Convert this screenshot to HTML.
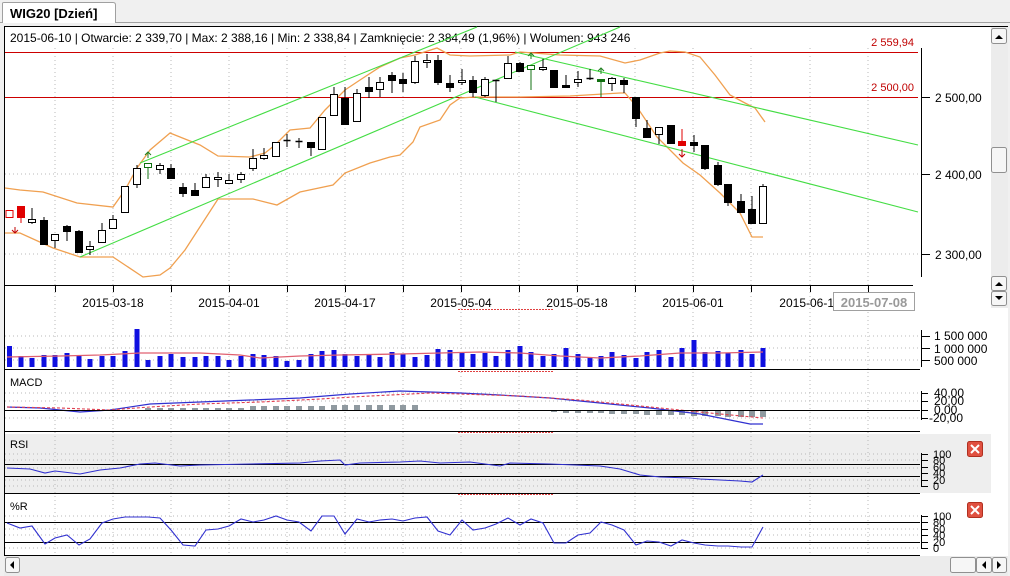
<!DOCTYPE html>
<html><head><meta charset="utf-8">
<style>
*{margin:0;padding:0;box-sizing:border-box}
body{width:1010px;height:576px;overflow:hidden;background:#f0f0f0;font-family:"Liberation Sans",sans-serif;position:relative}
svg{position:absolute;left:0;top:0}
</style></head><body>
<svg width="1010" height="576" viewBox="0 0 1010 576" font-family="Liberation Sans, sans-serif">
<rect x="0" y="22" width="1010" height="554" fill="#f0f0f0"/>
<line x1="0" y1="22.5" x2="1010" y2="22.5" stroke="#a0a0a0"/>
<path d="M2.5 23 V3.5 Q2.5 2.5 4 2.5 H113 Q115.5 2.5 115.5 5 V23" fill="#fff" stroke="#a0a0a0"/>
<text x="10" y="18" font-size="13" font-weight="bold" fill="#000">WIG20 [Dzień]</text>
<rect x="4" y="26" width="1004" height="530" fill="#fff"/>
<line x1="4.5" y1="26" x2="4.5" y2="556" stroke="#000"/>
<line x1="4" y1="26.5" x2="1008" y2="26.5" stroke="#000"/>
<rect x="5" y="434" width="986" height="59" fill="#eeeeee"/>
<g stroke="#b8b8b8" stroke-dasharray="1,3">
<line x1="55" y1="48" x2="55" y2="556"/><line x1="113" y1="48" x2="113" y2="556"/><line x1="171" y1="48" x2="171" y2="556"/><line x1="229" y1="48" x2="229" y2="556"/><line x1="287" y1="48" x2="287" y2="556"/><line x1="345" y1="48" x2="345" y2="556"/><line x1="403" y1="48" x2="403" y2="556"/><line x1="461" y1="48" x2="461" y2="556"/><line x1="519" y1="48" x2="519" y2="556"/><line x1="577" y1="48" x2="577" y2="556"/><line x1="635" y1="48" x2="635" y2="556"/><line x1="693" y1="48" x2="693" y2="556"/><line x1="751" y1="48" x2="751" y2="556"/><line x1="810" y1="48" x2="810" y2="556"/><line x1="868" y1="48" x2="868" y2="556"/>
<line x1="5" y1="174" x2="920" y2="174"/><line x1="5" y1="254" x2="920" y2="254"/>
<line x1="5" y1="336" x2="920" y2="336"/><line x1="5" y1="348" x2="920" y2="348"/><line x1="5" y1="360" x2="920" y2="360"/>
<line x1="5" y1="393" x2="920" y2="393"/><line x1="5" y1="401" x2="920" y2="401"/><line x1="5" y1="418" x2="920" y2="418"/>
<line x1="5" y1="454" x2="920" y2="454"/><line x1="5" y1="460" x2="920" y2="460"/><line x1="5" y1="468" x2="920" y2="468"/><line x1="5" y1="480" x2="920" y2="480"/><line x1="5" y1="486" x2="920" y2="486"/>
<line x1="5" y1="516" x2="920" y2="516"/><line x1="5" y1="529" x2="920" y2="529"/><line x1="5" y1="535" x2="920" y2="535"/><line x1="5" y1="548" x2="920" y2="548"/>
</g>
<text x="10" y="42" font-size="12" fill="#000">2015-06-10 | Otwarcie: 2 339,70 | Max: 2 388,16 | Min: 2 338,84 | Zamknięcie: 2 384,49 (1,96%)  | Wolumen: 943 246</text>
<line x1="5" y1="52.5" x2="918" y2="52.5" stroke="#cc0000"/>
<line x1="5" y1="97.5" x2="918" y2="97.5" stroke="#cc0000"/>
<text x="914" y="46" font-size="11" fill="#c00000" text-anchor="end">2 559,94</text>
<text x="914" y="91" font-size="11" fill="#c00000" text-anchor="end">2 500,00</text>
<line x1="921.5" y1="48" x2="921.5" y2="277" stroke="#000"/>
<g stroke="#000"><line x1="921" y1="97.5" x2="930" y2="97.5"/><line x1="921" y1="174.5" x2="930" y2="174.5"/><line x1="921" y1="254.5" x2="930" y2="254.5"/></g>
<g font-size="12" fill="#000"><text x="935" y="102">2 500,00</text><text x="935" y="179">2 400,00</text><text x="935" y="259">2 300,00</text></g>
<g fill="none" stroke="#f0a050" stroke-width="1.3">
<polyline points="5,188 20,190 43,192 77,203 113,207 125,190 137,168 150,150 170,133 200,145 218,156 250,157 265,153 275,145 290,130 310,128 325,110 345,90 360,80 380,67 400,58 415,55 437,48 450,55 470,56 510,55 520,52 560,55 600,56 625,63 640,60 660,53 670,51 685,52 700,57 715,75 730,95 745,103 755,108 765,122"/>
<polyline points="5,233 20,233 53,248 80,257 113,257 125,265 143,277 160,275 170,268 185,250 218,199 253,199 277,205 300,192 333,185 345,173 370,163 390,157 400,155 413,142 420,127 440,120 450,105 460,98 475,97 520,97 570,96 620,93 625,93 637,107 657,137 683,163 700,175 720,193 740,213 752,237 763,237"/>
</g>
<g stroke="#44dd44" stroke-width="1.1">
<line x1="140" y1="163" x2="477" y2="27"/>
<line x1="80" y1="257" x2="620" y2="27"/>
<line x1="515" y1="52" x2="918" y2="145"/>
<line x1="475" y1="97" x2="918" y2="212"/>
</g>
<g id="candles"></g>
<g fill="none" stroke-width="1">
<path d="M15 227 v6 M12 230 l3 3 3 -3" stroke="#c00000"/>
<path d="M148 158 v-6 M145 155 l3 -3 3 3" stroke="#208020"/>
<path d="M531 59 v-6 M528 56 l3 -3 3 3" stroke="#208020"/>
<path d="M601 74 v-6 M598 71 l3 -3 3 3" stroke="#208020"/>
<path d="M682 149 v8 M679 154 l3 3 3 -3" stroke="#c00000"/>
</g>
<line x1="5" y1="285.5" x2="913" y2="285.5" stroke="#000"/>
<g stroke="#000"><line x1="55.5" y1="285" x2="55.5" y2="292"/><line x1="113.5" y1="285" x2="113.5" y2="292"/><line x1="171.5" y1="285" x2="171.5" y2="292"/><line x1="229.5" y1="285" x2="229.5" y2="292"/><line x1="287.5" y1="285" x2="287.5" y2="292"/><line x1="345.5" y1="285" x2="345.5" y2="292"/><line x1="403.5" y1="285" x2="403.5" y2="292"/><line x1="461.5" y1="285" x2="461.5" y2="292"/><line x1="519.5" y1="285" x2="519.5" y2="292"/><line x1="577.5" y1="285" x2="577.5" y2="292"/><line x1="635.5" y1="285" x2="635.5" y2="292"/><line x1="693.5" y1="285" x2="693.5" y2="292"/><line x1="751.5" y1="285" x2="751.5" y2="292"/><line x1="810.5" y1="285" x2="810.5" y2="292"/><line x1="868.5" y1="285" x2="868.5" y2="292"/></g>
<g font-size="12" fill="#000" text-anchor="middle"><text x="113" y="307">2015-03-18</text><text x="229" y="307">2015-04-01</text><text x="345" y="307">2015-04-17</text><text x="461" y="307">2015-05-04</text><text x="577" y="307">2015-05-18</text><text x="693" y="307">2015-06-01</text><text x="810" y="307">2015-06-15</text></g>
<rect x="833.5" y="292.5" width="81" height="18" fill="#fff" stroke="#a0a0a0"/>
<text x="874" y="307" font-size="13" font-weight="bold" fill="#999" text-anchor="middle">2015-07-08</text>
<g stroke="#e04040" stroke-dasharray="2,1"><line x1="458" y1="309.5" x2="553" y2="309.5"/><line x1="458" y1="371.5" x2="553" y2="371.5"/><line x1="458" y1="432.5" x2="553" y2="432.5"/><line x1="458" y1="494.5" x2="553" y2="494.5"/></g>
<g id="vol"></g>
<polyline fill="none" stroke="#e06070" stroke-width="1.3" points="7,357 60,356 100,355 140,353 200,353 240,355 260,358 300,356 340,355 400,354 440,353 480,352 520,353 560,356 600,358 640,356 680,353 720,353 763,352"/>
<line x1="5" y1="369.5" x2="920" y2="369.5" stroke="#000"/>
<line x1="921.5" y1="330" x2="921.5" y2="367" stroke="#000"/>
<g stroke="#000"><line x1="921" y1="336.5" x2="930" y2="336.5"/><line x1="921" y1="348.5" x2="930" y2="348.5"/><line x1="921" y1="360.5" x2="930" y2="360.5"/></g>
<g font-size="12" fill="#000"><text x="934" y="340">1 500 000</text><text x="934" y="353">1 000 000</text><text x="934" y="365">500 000</text></g>
<text x="10" y="386" font-size="11" fill="#000">MACD</text>
<g id="hist" fill="#909aa0"></g>
<polyline fill="none" stroke="#3030d0" stroke-width="1.2" points="7,407 40,408 80,412 110,410 150,404 200,402 250,400 300,398 350,394 400,391 430,392 460,393 500,395 550,398 600,403 650,408 700,414 730,420 750,424 763,424"/>
<polyline fill="none" stroke="#e04050" stroke-width="1.1" stroke-dasharray="3,2" points="7,407 60,408 110,410 150,407 200,404 260,402 320,399 370,396 430,393 460,394 520,396 580,400 630,405 680,410 720,414 763,418"/>
<line x1="5" y1="410.5" x2="920" y2="410.5" stroke="#000"/>
<line x1="5" y1="431.5" x2="920" y2="431.5" stroke="#000"/>
<line x1="921.5" y1="391" x2="921.5" y2="420" stroke="#000"/>
<g stroke="#000"><line x1="921" y1="393.5" x2="928" y2="393.5"/><line x1="921" y1="401.5" x2="928" y2="401.5"/><line x1="921" y1="410.5" x2="928" y2="410.5"/><line x1="921" y1="418.5" x2="928" y2="418.5"/></g>
<g font-size="12" fill="#000"><text x="934" y="397">40,00</text><text x="934" y="405">20,00</text><text x="934" y="414">0,00</text><text x="929" y="422">-20,00</text></g>
<text x="10" y="448" font-size="11" fill="#000">RSI</text>
<line x1="5" y1="464.5" x2="920" y2="464.5" stroke="#000"/>
<line x1="5" y1="476.5" x2="920" y2="476.5" stroke="#000"/>
<polyline fill="none" stroke="#3030d0" stroke-width="1.1" points="7,468 30,469 45,473 55,471 80,474 100,470 120,468 140,464 155,463 180,466 200,465 250,464 300,463 320,461 340,460 345,465 360,463 400,462 420,461 440,463 470,462 500,466 510,463 550,464 600,466 620,469 640,475 660,477 690,478 700,479 720,480 740,481 752,482 763,475"/>
<line x1="5" y1="493.5" x2="920" y2="493.5" stroke="#000"/>
<line x1="921.5" y1="453" x2="921.5" y2="487" stroke="#000"/>
<g stroke="#000"><line x1="921" y1="454.5" x2="928" y2="454.5"/><line x1="921" y1="460.5" x2="928" y2="460.5"/><line x1="921" y1="467.5" x2="928" y2="467.5"/><line x1="921" y1="473.5" x2="928" y2="473.5"/><line x1="921" y1="480.5" x2="928" y2="480.5"/><line x1="921" y1="486.5" x2="928" y2="486.5"/></g>
<g font-size="11" fill="#000"><text x="933" y="458">100</text><text x="933" y="464">80</text><text x="933" y="471">60</text><text x="933" y="477">40</text><text x="933" y="484">20</text><text x="933" y="490">0</text></g>
<text x="10" y="510" font-size="11" fill="#000">%R</text>
<line x1="5" y1="522.5" x2="920" y2="522.5" stroke="#000"/>
<line x1="5" y1="542.5" x2="920" y2="542.5" stroke="#000"/>
<polyline fill="none" stroke="#3030d0" stroke-width="1.1" points="7,523 20,528 32,526 45,544 55,538 67,535 79,545 90,539 102,523 113,519 125,517 137,517 148,517 160,518 171,530 183,545 195,546 206,530 218,529 229,526 241,519 253,522 264,520 276,516 287,520 299,522 311,531 322,516 334,516 345,534 357,519 369,522 380,520 392,519 403,521 415,518 427,517 438,531 450,535 462,520 473,530 485,528 496,524 508,518 520,525 531,519 543,523 554,543 566,543 578,535 590,533 601,522 612,525 624,530 636,545 647,541 659,542 671,546 682,540 694,543 705,545 718,546 728,546 741,547 752,547 763,527"/>
<line x1="5" y1="555.5" x2="920" y2="555.5" stroke="#000"/>
<line x1="921.5" y1="515" x2="921.5" y2="549" stroke="#000"/>
<g stroke="#000"><line x1="921" y1="516.5" x2="928" y2="516.5"/><line x1="921" y1="522.5" x2="928" y2="522.5"/><line x1="921" y1="529.5" x2="928" y2="529.5"/><line x1="921" y1="535.5" x2="928" y2="535.5"/><line x1="921" y1="542.5" x2="928" y2="542.5"/><line x1="921" y1="548.5" x2="928" y2="548.5"/></g>
<g font-size="11" fill="#000"><text x="933" y="520">100</text><text x="933" y="526">80</text><text x="933" y="533">60</text><text x="933" y="539">40</text><text x="933" y="546">20</text><text x="933" y="552">0</text></g>
<g><rect x="967.5" y="441.5" width="15" height="15" rx="2" fill="#e05040" stroke="#b03020"/><path d="M971 445 l8 8 M979 445 l-8 8" stroke="#fff" stroke-width="2"/></g>
<g><rect x="967.5" y="502.5" width="15" height="15" rx="2" fill="#e05040" stroke="#b03020"/><path d="M971 506 l8 8 M979 506 l-8 8" stroke="#fff" stroke-width="2"/></g>
<rect x="991" y="27" width="17" height="281" fill="#ececec"/>
<rect x="991.5" y="28.5" width="15" height="15" rx="2" fill="#f6f6f6" stroke="#909090"/><path d="M995 39 l4 -4 4 4z" fill="#000"/>
<rect x="991.5" y="147.5" width="15" height="25" rx="2" fill="#f6f6f6" stroke="#909090"/>
<rect x="991.5" y="276.5" width="15" height="14" rx="2" fill="#f6f6f6" stroke="#909090"/><path d="M995 286 l4 -4 4 4z" fill="#000"/>
<rect x="991.5" y="291.5" width="15" height="14" rx="2" fill="#f6f6f6" stroke="#909090"/><path d="M995 296 l4 4 4 -4z" fill="#000"/>
<rect x="4" y="556" width="1004" height="20" fill="#ececec"/>
<rect x="5.5" y="557.5" width="14" height="15" rx="2" fill="#f6f6f6" stroke="#909090"/><path d="M14 561 l-4 4 4 4z" fill="#000"/>
<rect x="950.5" y="557.5" width="25" height="15" rx="2" fill="#f6f6f6" stroke="#909090"/>
<rect x="976.5" y="557.5" width="15" height="15" rx="2" fill="#f6f6f6" stroke="#909090"/><path d="M986 561 l-4 4 4 4z" fill="#000"/>
<rect x="992.5" y="557.5" width="14" height="15" rx="2" fill="#f6f6f6" stroke="#909090"/><path d="M997 561 l4 4 -4 4z" fill="#000"/>
</svg>
<script>
var NS="http://www.w3.org/2000/svg";
function el(p,t,a){var e=document.createElementNS(NS,t);for(var k in a)e.setAttribute(k,a[k]);p.appendChild(e);return e;}
var C=[[9.5,210,217,210,217,'rw'],[21,206,217,206,223,'r'],[32,219,222,208,224,'w'],[44,220,244,217,244,'b'],[55,234,240,234,248,'w'],[67,226,231,225,241,'b'],[79,231,252,230,252,'b'],[90,246,249,241,255,'w'],[102,230,242,223,242,'w'],[113,219,228,215,228,'w'],[125,186,212,186,212,'w'],[137,168,184,165,188,'w'],[148,163,167,163,179,'g'],[160,165,169,163,174,'w'],[171,168,178,164,178,'b'],[183,187,193,183,197,'b'],[195,190,195,183,195,'b'],[206,177,187,174,187,'w'],[218,177,179,172,187,'w'],[229,180,183,174,184,'w'],[241,174,179,172,183,'w'],[253,158,168,149,171,'w'],[264,155,158,148,160,'w'],[276,142,156,142,156,'w'],[287,140,140,134,147,'x'],[299,141,141,138,148,'x'],[311,142,147,142,156,'b'],[322,117,149,117,149,'w'],[334,94,115,87,115,'w'],[345,98,124,87,124,'b'],[357,93,121,89,121,'w'],[369,87,91,77,98,'b'],[380,82,89,77,97,'w'],[392,75,80,72,93,'b'],[403,79,83,73,92,'b'],[415,61,82,56,84,'w'],[427,60,62,54,68,'w'],[438,60,82,55,85,'b'],[450,83,87,75,92,'b'],[462,80,82,69,85,'w'],[473,80,92,76,97,'b'],[485,79,95,77,97,'w'],[496,80,80,80,102,'x'],[508,63,78,56,78,'w'],[520,63,71,62,71,'b'],[531,65,69,65,90,'g'],[543,67,69,59,71,'w'],[554,70,87,70,87,'b'],[566,85,87,75,88,'b'],[578,79,82,71,87,'w'],[590,78,79,69,80,'x'],[601,79,81,79,97,'gf'],[612,78,83,77,91,'w'],[624,80,84,78,93,'b'],[636,97,118,97,127,'b'],[647,128,137,120,137,'b'],[659,127,134,127,144,'w'],[671,125,143,125,143,'b'],[682,141,145,129,145,'r'],[694,142,145,135,152,'b'],[705,145,168,145,170,'b'],[718,165,184,162,186,'b'],[728,184,202,184,206,'b'],[741,201,212,194,212,'b'],[752,209,223,196,223,'b'],[763,186,223,184,224,'w']];
var g=document.getElementById('candles');
C.forEach(function(c){var x=c[0],t=c[5];
var col=(t=='r'||t=='rw')?'#e00000':(t=='g'||t=='gf')?'#107010':'#000';
el(g,'line',{x1:x,y1:c[3],x2:x,y2:c[4],stroke:col,'stroke-width':1});
if(t=='x'){el(g,'line',{x1:x-3.5,y1:c[1]+.5,x2:x+3.5,y2:c[1]+.5,stroke:col,'stroke-width':1.5});return;}
var h=Math.max(c[2]-c[1],2);
var fill=(t=='b'||t=='r'||t=='gf')?col:'#fff';
el(g,'rect',{x:x-3.5,y:c[1]+.5,width:7,height:h,fill:fill,stroke:col,'stroke-width':1});
});
var V=[346,356,358,355,355,353,355,359,356,356,351,329,360,356,354,357,357,356,356,360,356,354,355,356,361,360,354,351,350,354,356,355,357,352,354,357,355,349,350,352,354,353,356,350,346,352,356,354,348,354,357,356,352,355,358,352,350,357,348,340,352,351,353,350,354,348];
var vg=document.getElementById('vol');
C.forEach(function(c,i){el(vg,'rect',{x:c[0]-2.5,y:V[i],width:5,height:367-V[i],fill:'#1010e0'});});
var hg=document.getElementById('hist');
C.forEach(function(c){var x=c[0];
if(x>140&&x<420){var h=(x<250)?2:(x<330?4:5);el(hg,'rect',{x:x-3,y:410-h,width:6,height:h});}
else if(x>545){var h=Math.round((x-545)/40)+1;el(hg,'rect',{x:x-3,y:411,width:6,height:Math.min(h,6)});}
});
</script>
</body></html>
